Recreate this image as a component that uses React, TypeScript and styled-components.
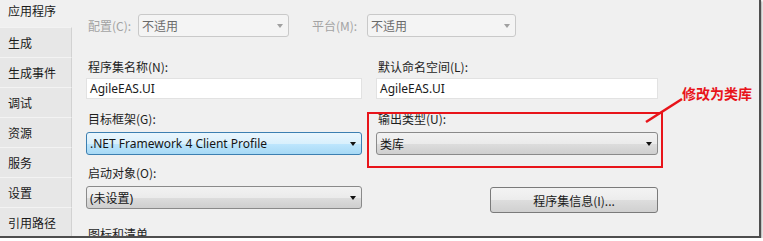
import React from 'react';
import styled, {createGlobalStyle} from 'styled-components';

const GlobalStyle = createGlobalStyle`
  html, body {
    margin: 0;
    padding: 0;
    background: #ffffff;
  }
  body {
    font-family: "Noto Sans", "Noto Sans CJK SC", sans-serif;
    font-size: 12px;
    color: #1e1e1e;
  }
`;

const tabs = ['应用程序', '生成', '生成事件', '调试', '资源', '服务', '设置', '引用路径'];

const App = () => {
  return (
    <>
      <GlobalStyle/>
      <Frame>
        <Sidebar>
          {tabs.map((t, i) => (
            <Tab key={t} active={i === 0}>{t}</Tab>
          ))}
          <SidebarRest/>
        </Sidebar>

        <Content>
          <TopRow>
            <DimLabel style={{width: 50}}>配置(C):</DimLabel>
            <Combo disabled width={151}>
              <span>不适用</span>
              <Arrow disabled/>
            </Combo>
            <DimLabel style={{width: 55, marginLeft: 21}}>平台(M):</DimLabel>
            <Combo disabled width={149}>
              <span>不适用</span>
              <Arrow disabled/>
            </Combo>
          </TopRow>

          <Divider/>

          <Grid>
            <Field>
              <Label>程序集名称(N):</Label>
              <TextBox>AgileEAS.UI</TextBox>
            </Field>
            <Field>
              <Label>默认命名空间(L):</Label>
              <TextBox>AgileEAS.UI</TextBox>
            </Field>

            <Field gap={5} top={12}>
              <Label>目标框架(G):</Label>
              <Combo focused width={276}>
                <span>.NET Framework 4 Client Profile</span>
                <Arrow/>
              </Combo>
            </Field>
            <Field gap={5} top={12}>
              <Label>输出类型(U):</Label>
              <Combo width={282}>
                <span>类库</span>
                <Arrow/>
              </Combo>
            </Field>

            <Field gap={5} top={10}>
              <Label>启动对象(O):</Label>
              <Combo width={276}>
                <span>(未设置)</span>
                <Arrow/>
              </Combo>
            </Field>
            <ButtonCell>
              <Button>程序集信息(I)...</Button>
            </ButtonCell>

            <Field gap={0} top={13}>
              <Label>图标和清单</Label>
            </Field>
          </Grid>
        </Content>

        <Highlight/>
        <Callout viewBox="0 0 763 241" width={763} height={241}>
          <line x1={646} y1={122} x2={682} y2={99} stroke="#e8141a" strokeWidth={2.6}/>
        </Callout>
        <Note>修改为类库</Note>
      </Frame>
    </>
  );
};

export default App;

const Frame = styled.div`
  position: relative;
  width: 759px;
  height: 236px;
  display: flex;
  background: #f0f0f0;
  border-right: 2px solid #4e4e4e;
  border-bottom: 2px solid #4e4e4e;
  box-shadow: 1px 1px 2px rgba(0, 0, 0, 0.35);
  overflow: hidden;
`;

const Sidebar = styled.div`
  width: 72px;
  flex: none;
  display: flex;
  flex-direction: column;
`;

const Tab = styled.div<{ active?: boolean }>`
  height: ${(p) => (p.active ? '27px' : '30px')};
  flex: none;
  display: flex;
  align-items: center;
  padding-left: 8px;
  padding-bottom: ${(p) => (p.active ? '6px' : '0')};
  box-sizing: border-box;
  font-family: "Noto Sans CJK SC", sans-serif;
  font-size: 12px;
  color: #1a1a1a;
  background: ${(p) => (p.active ? '#f0f0f0' : '#e7e7e7')};
  border-right: 1px solid ${(p) => (p.active ? '#f0f0f0' : '#d2d2d2')};
  border-top: ${(p) => (p.active ? 'none' : '1px solid #f3f3f3')};
`;

const SidebarRest = styled.div`
  flex: 1;
  background: #e7e7e7;
  border-right: 1px solid #d2d2d2;
`;

const Content = styled.div`
  flex: 1;
  display: flex;
  flex-direction: column;
  padding: 14px 0 0 14px;
  min-width: 0;
`;

const TopRow = styled.div`
  display: flex;
  align-items: center;
  height: 23px;
`;

const DimLabel = styled.span`
  flex: none;
  padding-left: 2px;
  font-family: "Noto Sans CJK SC", sans-serif;
  color: #a3a3a3;
`;

const Divider = styled.div`
  height: 1px;
  background: #a6a6a6;
  margin-top: 15px;
`;

const Grid = styled.div`
  display: grid;
  grid-template-columns: 276px 282px;
  column-gap: 14px;
  align-items: start;
`;

const Field = styled.div<{ gap?: number; top?: number }>`
  display: flex;
  flex-direction: column;
  gap: ${(p) => p.gap ?? 3}px;
  margin-top: ${(p) => p.top ?? 7}px;
`;

const Label = styled.span`
  height: 16px;
  line-height: 16px;
  padding-left: 2px;
  font-family: "Noto Sans CJK SC", sans-serif;
  color: #1e1e1e;
`;

const TextBox = styled.div`
  height: 21px;
  box-sizing: border-box;
  display: flex;
  align-items: center;
  padding-left: 3px;
  background: #ffffff;
  border: 1px solid #e2e2e2;
  color: #1a1a1a;
`;

const Combo = styled.div<{ width: number; disabled?: boolean; focused?: boolean }>`
  width: ${(p) => p.width}px;
  height: 23px;
  box-sizing: border-box;
  display: flex;
  align-items: center;
  justify-content: space-between;
  padding: 0 5px 0 3px;
  border-radius: 3px;
  font-family: "Noto Sans", "Noto Sans CJK SC", sans-serif;
  color: ${(p) => (p.disabled ? '#6a6a6a' : '#151515')};
  border: 1px solid ${(p) => (p.disabled ? '#c9c9c9' : p.focused ? '#3c7fb1' : '#8a8a8a')};
  background: ${(p) =>
    p.disabled
      ? '#f4f4f4'
      : p.focused
        ? 'linear-gradient(#eaf6fd 0%, #d9f0fc 50%, #bee6fd 51%, #a7d9f5 100%)'
        : 'linear-gradient(#f2f2f2 0%, #ebebeb 50%, #dddddd 51%, #cfcfcf 100%)'};
`;

const Arrow = styled.span<{ disabled?: boolean }>`
  width: 0;
  height: 0;
  border-left: 3.5px solid transparent;
  border-right: 3.5px solid transparent;
  border-top: 4px solid ${(p) => (p.disabled ? '#a0a0a0' : '#111111')};
`;

const ButtonCell = styled.div`
  display: flex;
  justify-content: flex-end;
  margin-top: 32px;
`;

const Button = styled.div`
  width: 168px;
  height: 26px;
  box-sizing: border-box;
  display: flex;
  align-items: center;
  justify-content: center;
  font-family: "Noto Sans CJK SC", sans-serif;
  color: #1a1a1a;
  border: 1px solid #7a7a7a;
  border-radius: 3px;
  background: linear-gradient(#f3f3f3 0%, #ececec 50%, #dddddd 51%, #d0d0d0 100%);
`;

const Highlight = styled.div`
  position: absolute;
  left: 367px;
  top: 112px;
  width: 296px;
  height: 56px;
  box-sizing: border-box;
  border: 2.5px solid #e8141a;
  pointer-events: none;
`;

const Callout = styled.svg`
  position: absolute;
  left: 0;
  top: 0;
  pointer-events: none;
`;

const Note = styled.span`
  position: absolute;
  left: 682px;
  top: 83px;
  font-family: "Noto Sans CJK SC", sans-serif;
  font-weight: bold;
  font-size: 14px;
  color: #e8141a;
`;
